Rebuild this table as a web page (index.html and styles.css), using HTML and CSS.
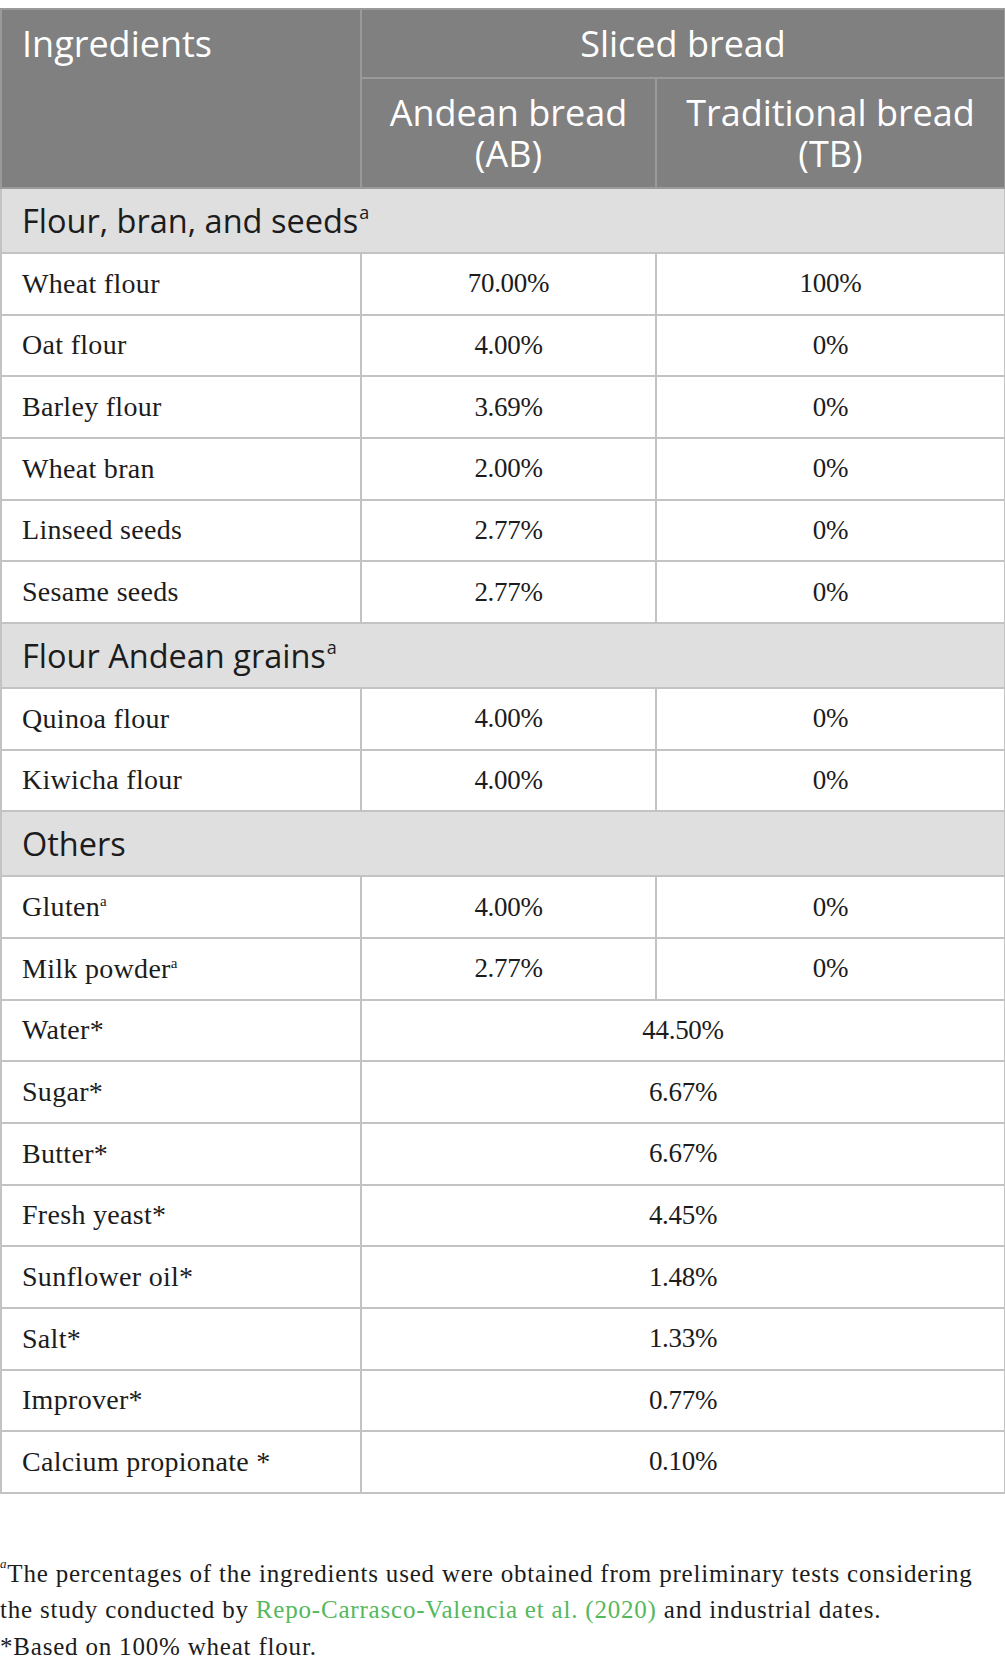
FILE: index.html
```html
<!DOCTYPE html>
<html>
<head>
<meta charset="utf-8">
<link rel="stylesheet" href="styles.css">
</head>
<body>
<table class="tbl">
  <colgroup>
    <col class="c1"><col class="c2"><col class="c3">
  </colgroup>
  <thead>
    <tr class="h1">
      <th rowspan="2" class="hl">Ingredients</th>
      <th colspan="2" class="hc">Sliced bread</th>
    </tr>
    <tr class="h2">
      <th class="hc"><span class="ln">Andean bread</span><span class="ln">(AB)</span></th>
      <th class="hc"><span class="ln">Traditional bread</span><span class="ln">(TB)</span></th>
    </tr>
  </thead>
  <tbody>
    <tr class="sec"><td colspan="3">Flour, bran, and seeds<sup>a</sup></td></tr>
    <tr><td class="nm">Wheat flour</td><td class="v">70.00%</td><td class="v">100%</td></tr>
    <tr><td class="nm">Oat flour</td><td class="v">4.00%</td><td class="v">0%</td></tr>
    <tr><td class="nm">Barley flour</td><td class="v">3.69%</td><td class="v">0%</td></tr>
    <tr><td class="nm">Wheat bran</td><td class="v">2.00%</td><td class="v">0%</td></tr>
    <tr><td class="nm">Linseed seeds</td><td class="v">2.77%</td><td class="v">0%</td></tr>
    <tr><td class="nm">Sesame seeds</td><td class="v">2.77%</td><td class="v">0%</td></tr>
    <tr class="sec"><td colspan="3">Flour Andean grains<sup>a</sup></td></tr>
    <tr><td class="nm">Quinoa flour</td><td class="v">4.00%</td><td class="v">0%</td></tr>
    <tr><td class="nm">Kiwicha flour</td><td class="v">4.00%</td><td class="v">0%</td></tr>
    <tr class="sec"><td colspan="3">Others</td></tr>
    <tr><td class="nm">Gluten<sup>a</sup></td><td class="v">4.00%</td><td class="v">0%</td></tr>
    <tr><td class="nm">Milk powder<sup>a</sup></td><td class="v">2.77%</td><td class="v">0%</td></tr>
    <tr><td class="nm">Water*</td><td class="v" colspan="2">44.50%</td></tr>
    <tr><td class="nm">Sugar*</td><td class="v" colspan="2">6.67%</td></tr>
    <tr><td class="nm">Butter*</td><td class="v" colspan="2">6.67%</td></tr>
    <tr><td class="nm">Fresh yeast*</td><td class="v" colspan="2">4.45%</td></tr>
    <tr><td class="nm">Sunflower oil*</td><td class="v" colspan="2">1.48%</td></tr>
    <tr><td class="nm">Salt*</td><td class="v" colspan="2">1.33%</td></tr>
    <tr><td class="nm">Improver*</td><td class="v" colspan="2">0.77%</td></tr>
    <tr><td class="nm">Calcium propionate *</td><td class="v" colspan="2">0.10%</td></tr>
  </tbody>
</table>
<div class="notes">
  <p class="n1"><sup class="fa">a</sup>The percentages of the ingredients used were obtained from preliminary tests considering</p>
  <p>the study conducted by <a class="ref">Repo-Carrasco-Valencia et al. (2020)</a> and industrial dates.</p>
  <p>*Based on 100% wheat flour.</p>
</div>
</body>
</html>
```
FILE: styles.css
```css
html, body {
  margin: 0;
  padding: 0;
  background: #ffffff;
}
body {
  padding-top: 8px;
  color: #1c1c1c;
}
.tbl {
  border-collapse: collapse;
  width: 1004px;
  table-layout: fixed;
}
.c1 { width: 360px; }
.c2 { width: 295px; }
.c3 { width: 349px; }
.tbl th, .tbl td {
  border: 2px solid #c3c3c3;
  padding: 0;
}
.tbl thead th {
  background: #7f807f;
  color: #ffffff;
  font-family: "Open Sans", "Noto Sans", sans-serif;
  font-weight: 400;
  font-size: 36px;
  border-color: #9a9a9a;
}
.h1 th { height: 67px; }
.h2 th { height: 108px; }
.ln {
  display: block;
  height: 41px;
  line-height: 41px;
}
.hl {
  text-align: left;
  vertical-align: top;
  padding: 12px 0 0 20px !important;
  line-height: 44px;
}
.hc { text-align: center; vertical-align: middle; }
.sec td {
  background: #e0dfe0;
  font-family: "Open Sans", "Noto Sans", sans-serif;
  font-size: 32.5px;
  color: #1c1c1c;
  height: 63px;
  padding-left: 20px;
}
.sec sup {
  font-size: 18px;
  vertical-align: top;
  position: relative;
  top: 2px;
  margin-left: 1px;
}
.nm, .v {
  font-family: "Liberation Serif", "Times New Roman", serif;
  font-size: 28px;
  height: 59.67px;
}
.nm {
  padding-left: 20px !important;
  letter-spacing: 0.3px;
}
.nm sup {
  font-size: 15px;
  vertical-align: top;
  position: relative;
  top: 2px;
  letter-spacing: 0;
}
.v {
  text-align: center;
  font-size: 27px;
  letter-spacing: -0.3px;
}
.notes {
  margin-top: 62px;
  font-family: "Liberation Serif", "Times New Roman", serif;
  font-size: 25px;
  line-height: 36.5px;
  letter-spacing: 0.8px;
  color: #1c1c1c;
  white-space: nowrap;
}
.notes p { margin: 0; }
.fa {
  font-size: 13px;
  font-style: italic;
  vertical-align: top;
  position: relative;
  top: 1px;
  line-height: 1;
}
.ref { color: #55b95c; text-decoration: none; }
```
